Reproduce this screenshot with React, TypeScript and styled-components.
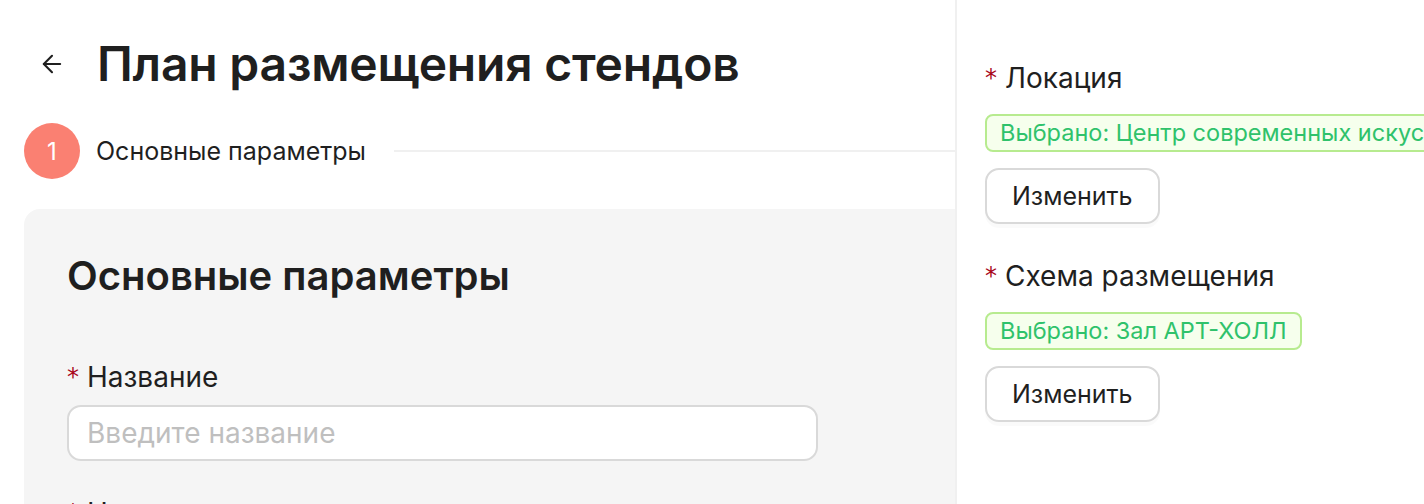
import styled, { createGlobalStyle } from "styled-components";
import { ArrowLeft } from "lucide-react";

const GlobalStyle = createGlobalStyle`
  html, body {
    margin: 0;
    padding: 0;
    background: #ffffff;
    font-family: Inter, "Noto Sans", sans-serif;
    color: rgba(0, 0, 0, 0.88);
  }
  * {
    box-sizing: border-box;
  }
`;

const Page = styled.div`
  display: flex;
  height: 504px;
  overflow: hidden;
`;

const Main = styled.main`
  width: 955px;
  flex-shrink: 0;
  display: flex;
  flex-direction: column;
`;

const Header = styled.header`
  display: flex;
  align-items: center;
  gap: 31px;
  padding: 36px 0 0 38px;
  height: 98px;
`;

const BackButton = styled.button`
  border: none;
  background: none;
  padding: 0;
  display: flex;
  color: #1f1f1f;
  cursor: pointer;
`;

const Title = styled.h1`
  margin: 0;
  font-size: 48px;
  font-weight: 600;
  letter-spacing: -0.2px;
  color: #1f1f1f;
  line-height: 56px;
  white-space: nowrap;
`;

const Steps = styled.div`
  display: flex;
  align-items: center;
  padding: 31px 0 30px 24px;
`;

const StepIcon = styled.span`
  width: 56px;
  height: 56px;
  border-radius: 50%;
  background: #fa8072;
  color: #ffffff;
  display: flex;
  align-items: center;
  justify-content: center;
  font-size: 24px;
  flex-shrink: 0;
`;

const StepTitle = styled.span`
  margin-left: 16px;
  font-size: 25px;
  color: #1f1f1f;
  white-space: nowrap;
`;

const StepLine = styled.span`
  flex: 1;
  height: 2px;
  margin-left: 28px;
  background: #f0f0f0;
`;

const Card = styled.section`
  flex: 1;
  margin-left: 24px;
  background: #f5f5f5;
  border-top-left-radius: 16px;
  padding: 43px 43px 0;
`;

const CardTitle = styled.h2`
  margin: 0 0 61px;
  font-size: 40px;
  font-weight: 600;
  color: #1f1f1f;
  line-height: 48px;
  white-space: nowrap;
`;

const Field = styled.div`
  display: flex;
  flex-direction: column;
  margin-bottom: 36px;
`;

const Label = styled.label<{ $gap?: number }>`
  display: flex;
  align-items: center;
  font-size: 28px;
  line-height: 32px;
  color: #1f1f1f;
  white-space: nowrap;
  margin-bottom: ${({ $gap }) => $gap ?? 12}px;
`;

const Required = styled.span`
  color: #a8071a;
  font-size: 24px;
  margin-right: 8px;
  font-family: "DejaVu Sans", sans-serif;
`;

const Input = styled.input`
  width: 751px;
  height: 56px;
  flex-shrink: 0;
  border: 2px solid #d9d9d9;
  border-radius: 14px;
  background: #ffffff;
  padding: 0 18px;
  font-family: inherit;
  font-size: 28px;
  color: #1f1f1f;
  outline: none;
  &::placeholder {
    color: #bfbfbf;
  }
`;

const Side = styled.aside`
  flex: 1;
  border-left: 2px solid #f0f0f0;
  padding: 62px 0 0 28px;
  display: flex;
  flex-direction: column;
  overflow: hidden;
`;

const SideField = styled.div`
  display: flex;
  flex-direction: column;
  align-items: flex-start;
  margin-bottom: 36px;
`;

const Tag = styled.span`
  display: inline-block;
  white-space: nowrap;
  height: 38px;
  line-height: 34px;
  padding: 0 13px;
  font-size: 23.5px;
  color: #2fc26b;
  background: #f6ffed;
  border: 2px solid #b7eb8f;
  border-radius: 8px;
  margin-bottom: 16px;
`;

const Button = styled.button`
  height: 56px;
  padding: 0 25px;
  border: 2px solid #d9d9d9;
  border-radius: 14px;
  background: #ffffff;
  box-shadow: 0 4px 0 rgba(0, 0, 0, 0.02);
  font-family: inherit;
  font-size: 25px;
  color: #1f1f1f;
  cursor: pointer;
`;

function RequiredLabel({ text, gap }: { text: string; gap?: number }) {
  return (
    <Label $gap={gap}>
      <Required>*</Required>
      {text}
    </Label>
  );
}

const selections = [
  { label: "Локация", value: "Выбрано: Центр современных искусств" },
  { label: "Схема размещения", value: "Выбрано: Зал АРТ-ХОЛЛ" },
];

export default function App() {
  return (
    <>
      <GlobalStyle />
      <Page>
        <Main>
          <Header>
            <BackButton aria-label="Назад">
              <ArrowLeft size={28} strokeWidth={1.8} />
            </BackButton>
            <Title>План размещения стендов</Title>
          </Header>
          <Steps>
            <StepIcon>1</StepIcon>
            <StepTitle>Основные параметры</StepTitle>
            <StepLine />
          </Steps>
          <Card>
            <CardTitle>Основные параметры</CardTitle>
            <Field>
              <RequiredLabel text="Название" />
              <Input placeholder="Введите название" />
            </Field>
            <Field>
              <RequiredLabel text="Название" />
              <Input placeholder="" />
            </Field>
          </Card>
        </Main>
        <Side>
          {selections.map((s) => (
            <SideField key={s.label}>
              <RequiredLabel text={s.label} gap={20} />
              <Tag>{s.value}</Tag>
              <Button>Изменить</Button>
            </SideField>
          ))}
        </Side>
      </Page>
    </>
  );
}
